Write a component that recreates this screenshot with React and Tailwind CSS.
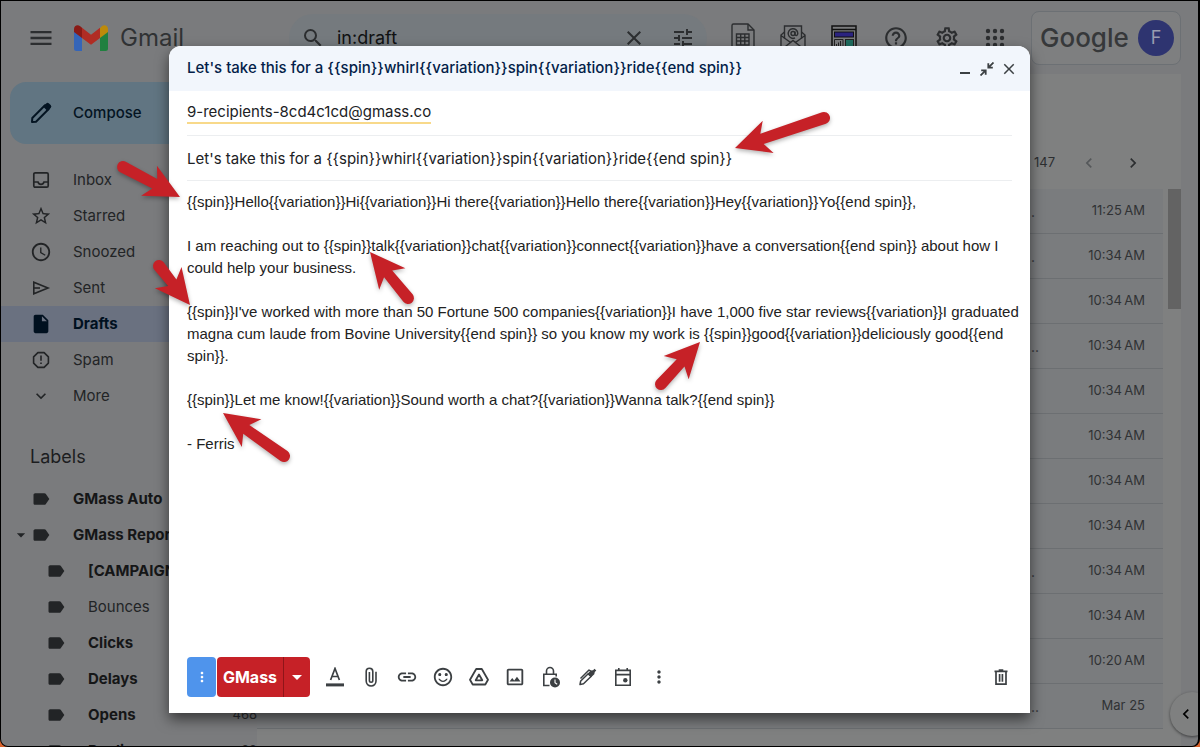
import { useState } from "react";
import {
    MdAccessTime,
    MdArrowDropDown,
    MdClose,
    MdExpandMore,
    MdHelpOutline,
    MdInsertDriveFile,
    MdLabel,
    MdLink,
    MdMenu,
    MdMoreVert,
    MdOutlineInsertPhoto,
    MdOutlineSettings,
    MdSearch,
    MdSentimentSatisfiedAlt,
    MdStarBorder,
    MdTune,
    MdChevronLeft,
    MdChevronRight,
} from "react-icons/md";

const SUBJECT = "Let's take this for a {{spin}}whirl{{variation}}spin{{variation}}ride{{end spin}}";

const BODY = `{{spin}}Hello{{variation}}Hi{{variation}}Hi there{{variation}}Hello there{{variation}}Hey{{variation}}Yo{{end spin}},

I am reaching out to {{spin}}talk{{variation}}chat{{variation}}connect{{variation}}have a conversation{{end spin}} about how I could help your business.

{{spin}}I've worked with more than 50 Fortune 500 companies{{variation}}I have 1,000 five star reviews{{variation}}I graduated magna cum laude from Bovine University{{end spin}} so you know my work is {{spin}}good{{variation}}deliciously good{{end spin}}.

{{spin}}Let me know!{{variation}}Sound worth a chat?{{variation}}Wanna talk?{{end spin}}

- Ferris`;

function InboxIcon() {
    return (
        <svg viewBox="0 0 20 20" className="size-5" fill="none" stroke="currentColor" strokeWidth="1.7">
            <rect x="2.8" y="2.8" width="14.4" height="14.4" rx="1.4" />
            <path d="M3 12h4c.4 1.5 1.5 2.3 3 2.3s2.600-.8 3-2.300h4" />
        </svg>
    );
}

function SentIcon() {
    return (
        <svg viewBox="0 0 20 20" className="size-5" fill="none" stroke="currentColor" strokeWidth="1.6">
            <path d="M2.800 4.200v11.600L17 10z" />
            <path d="M2.800 10H9" />
        </svg>
    );
}

function SpamIcon() {
    return (
        <svg viewBox="0 0 20 20" className="size-5">
            <path fill="none" stroke="currentColor" strokeWidth="1.6" strokeLinejoin="round" d="M6.900 2.600h6.200l4.300 4.300v6.200l-4.300 4.300H6.900L2.600 13.100V6.900z" />
            <path fill="currentColor" d="M9.200 5.600h1.600v5.200H9.200zM9.200 12.400h1.600V14H9.200z" />
        </svg>
    );
}

function PencilIcon() {
    return (
        <svg viewBox="0 0 24 24" className="size-6">
            <path fill="none" stroke="currentColor" strokeWidth="2" strokeLinejoin="round" d="M3 21l.3-4L16 4.300 19.700 8 7 20.700z" />
            <path fill="currentColor" d="M14 5.500L17.200 2.400a2 2 0 0 1 2.800 0l1.700 1.700a2 2 0 0 1 0 2.800L18.500 10z" />
        </svg>
    );
}

function GmailLogo() {
    return (
        <svg viewBox="0 0 34 26" className="h-[26px] w-[34px]">
            <path fill="#3565b8" d="M0 6l8 6v14H2.500A2.500 2.500 0 0 1 0 23.500z" />
            <path fill="#20803f" d="M34 6l-8 6v14h5.500a2.500 2.500 0 0 0 2.500-2.500z" />
            <path fill="#bd8a0a" d="M26 3.200l1.800-1.900C30.500-1 34 .8 34 4v3l-8 6z" />
            <path fill="#8a1a15" d="M0 7V4C0 .8 3.500-1 6.200 1.300L8 2.800V13z" />
            <path fill="#b02c24" d="M8 2.800l9 6.900 9-6.900V13l-9 6.800L8 13z" />
        </svg>
    );
}

function SheetIcon() {
    return (
        <svg viewBox="0 0 24 30" className="h-[30px] w-6" fill="none" stroke="currentColor" strokeWidth="1.4">
            <path d="M1 2.500A1.500 1.500 0 0 1 2.500 1H17l6 6v21.500H1z" />
            <path d="M17 1v6h6" />
            <path d="M5.500 11h12.500v11H5.500zM5.500 14.500H18M5.500 18H18M9.700 11v11M13.800 11v11" />
        </svg>
    );
}

function MailAtIcon() {
    return (
        <svg viewBox="0 0 26 26" className="size-[26px]" fill="none" stroke="currentColor" strokeWidth="1.4">
            <path d="M4.500 13.500V1h17v12.500" />
            <path d="M4.500 7L1 10v15h24V10l-3.500-3M1 10.500l9.500 7L1 25M25 10.500l-9.500 7L25 25M10.500 17.500l2.500-2 2.500 2" />
            <circle cx="13" cy="8.500" r="2" />
            <path d="M15 6.500v2.800c0 1.800 2.800 1.600 2.800-.8A4.800 4.800 0 1 0 15 12.900" />
        </svg>
    );
}

function TemplateIcon() {
    return (
        <svg viewBox="0 0 26 26" className="size-[26px]">
            <path fill="none" stroke="#111" strokeWidth="1.500" d="M1 1h24v24H1zM1 4.500h24" />
            <rect x="3.500" y="7" width="19" height="5" fill="#2b2380" stroke="#111" />
            <path fill="none" stroke="#222" d="M3.500 14.500h8.500v9H3.500zM5.500 21v-2M7.500 21v-3.500M9.500 21v-5" />
            <rect x="14.500" y="14.500" width="8" height="9" fill="#1f6d60" stroke="#222" />
        </svg>
    );
}

function AppsIcon() {
    const spots = [3, 10, 17];
    return (
        <svg viewBox="0 0 20 20" className="size-5" fill="currentColor">
            {spots.map(y => spots.map(x => <circle key={`${x}-${y}`} cx={x} cy={y} r="2.200" />))}
        </svg>
    );
}

function ShrinkIcon() {
    return (
        <svg viewBox="0 0 14 14" className="size-3.5" fill="none" stroke="currentColor" strokeWidth="1.8">
            <path d="M13.500.5L8.600 5.400M8.300 1.200v4.500h4.500" />
            <path d="M.5 13.500l4.900-4.900M1.200 8.300h4.500v4.500" />
        </svg>
    );
}

function TextColorIcon() {
    return (
        <svg viewBox="0 0 20 20" className="size-5">
            <rect x="1" y="16.400" width="18" height="3" fill="currentColor" />
            <path fill="none" stroke="currentColor" strokeWidth="1.700" d="M5.600 13L10 1.500 14.400 13M7 9.500h6" />
        </svg>
    );
}

function PaperclipIcon() {
    return (
        <svg viewBox="0 0 20 20" className="size-5" fill="none" stroke="currentColor" strokeWidth="1.600">
            <path d="M15 4.800v9.300a4.900 4.900 0 0 1-9.800 0V4.600a3.300 3.300 0 0 1 6.600 0v9a1.700 1.700 0 0 1-3.400 0V5" />
        </svg>
    );
}

function DriveIcon() {
    return (
        <svg viewBox="0 0 20 20" className="size-5" fill="none" stroke="currentColor" strokeWidth="1.800" strokeLinejoin="round">
            <path d="M7.200 2h5.600L19 12.800 16.300 17.500H3.700L1 12.800z" />
            <path d="M10 7.500l3.300 5.800H6.700z" />
        </svg>
    );
}

function LockClockIcon() {
    return (
        <svg viewBox="0 0 20 22" className="h-[22px] w-5">
            <path fill="none" stroke="currentColor" strokeWidth="1.600" d="M8.500 19.500H2.800V8.200h12.400v2.300M5.500 8V5a3.500 3.500 0 0 1 7 0v3" />
            <circle cx="14" cy="16.500" r="5" fill="currentColor" />
            <path fill="none" stroke="#fff" strokeWidth="1.100" d="M14 13.500v3.200l2.200 1.500" />
        </svg>
    );
}

function PenIcon() {
    return (
        <svg viewBox="0 0 20 20" className="size-5">
            <path fill="none" stroke="currentColor" strokeWidth="1.500" strokeLinejoin="round" d="M3 17.500l.7-3.500 7.500-7.300 2.800 2.800-7.500 7.300zM3.500 11.500L12 3l1.800 1.200" />
            <path fill="currentColor" d="M10.500 6.800l3.300-3.300L16 3.200 17.500 1.700l1.800 1.800-1.500 1.600-.5 2.100-3.500 3.200z" />
        </svg>
    );
}

function CalendarIcon() {
    return (
        <svg viewBox="0 0 20 20" className="size-5">
            <path fill="none" stroke="currentColor" strokeWidth="1.600" d="M2.800 3.400h14.400v14.800H2.800zM2.800 7.600h14.400M5.800 1v3M14.200 1v3" />
            <circle cx="12.300" cy="13.200" r="2.200" fill="currentColor" />
        </svg>
    );
}

function TrashIcon() {
    return (
        <svg viewBox="0 0 14 16" className="h-4 w-3.5" fill="none" stroke="currentColor" strokeWidth="1.700">
            <path d="M.5 2.400h13M4.700 1.200h4.600M2 2.500v12.700h10V2.500M5.600 5v7.800M8.400 5v7.800" />
        </svg>
    );
}

function IconButton({ label, className = "", children }) {
    return (
        <button type="button" aria-label={label} className={`flex shrink-0 items-center justify-center ${className}`}>
            {children}
        </button>
    );
}

const folders = [
    { name: "Inbox", icon: <InboxIcon /> },
    { name: "Starred", icon: <MdStarBorder className="size-[22px] shrink-0" /> },
    { name: "Snoozed", icon: <MdAccessTime className="size-[22px] shrink-0" /> },
    { name: "Sent", icon: <SentIcon /> },
    { name: "Drafts", icon: <MdInsertDriveFile className="size-[22px] shrink-0" />, active: true },
    { name: "Spam", icon: <SpamIcon /> },
    { name: "More", icon: <MdExpandMore className="size-5" /> },
];

const labels = [
    { name: "GMass Auto", bold: true },
    { name: "GMass Reports", bold: true, open: true },
    { name: "[CAMPAIGNS]", bold: true, child: true },
    { name: "Bounces", child: true },
    { name: "Clicks", bold: true, child: true },
    { name: "Delays", bold: true, child: true },
    { name: "Opens", bold: true, child: true, count: "468" },
    { name: "Replies", bold: true, child: true, count: "22" },
];

const drafts = [
    { time: "11:25\u202fAM", dots: "." },
    { time: "10:34\u202fAM", dots: "." },
    { time: "10:34\u202fAM" },
    { time: "10:34\u202fAM", dots: ".." },
    { time: "10:34\u202fAM" },
    { time: "10:34\u202fAM" },
    { time: "10:34\u202fAM" },
    { time: "10:34\u202fAM" },
    { time: "10:34\u202fAM", dots: "." },
    { time: "10:34\u202fAM" },
    { time: "10:20\u202fAM" },
    { time: "Mar 25", dots: ".." },
];

// tip and tail of each annotation arrow
const arrows = [
    { tip: [735, 148], tail: [824, 118] },
    { tip: [180, 197], tail: [123, 167] },
    { tip: [190, 305], tail: [159, 266] },
    { tip: [370, 252], tail: [408, 298] },
    { tip: [223, 413], tail: [284, 456] },
    { tip: [700, 342], tail: [661, 384] },
];

function Arrows() {
    return (
        <svg className="pointer-events-none absolute top-0 left-0 h-[747px] w-[1200px] drop-shadow-[0_2px_2px_rgba(0,0,0,0.3)]" fill="#c62127" aria-hidden="true">
            {arrows.map(({ tip, tail }) => {
                const dx = tail[0] - tip[0];
                const dy = tail[1] - tip[1];
                const len = Math.hypot(dx, dy);
                const angle = (Math.atan2(dy, dx) * 180) / Math.PI;
                return (
                    <path
                        key={tip.join()}
                        transform={`translate(${tip[0]} ${tip[1]}) rotate(${angle})`}
                        d={`M0 0L35-17 28.500-5.300 ${len}-6A6 6 0 0 1 ${len} 6L28.500 5.300 35 17z`}
                    />
                );
            })}
        </svg>
    );
}

function TopBar() {
    return (
        <header className="flex h-[73px] shrink-0 items-center text-[#2c2e30]">
            <IconButton label="Main menu" className="ml-[26px] size-7">
                <MdMenu className="size-7" />
            </IconButton>
            <a href="#inbox" className="ml-[19px] flex w-[215px] items-center gap-3">
                <GmailLogo />
                <span className="text-[24px] text-[#303234]">Gmail</span>
            </a>
            <form className="flex h-12 min-w-0 flex-1 items-center rounded-full bg-[#757a7e] px-3">
                <IconButton label="Search" className="size-6">
                    <MdSearch className="size-6" />
                </IconButton>
                <input
                    aria-label="Search mail"
                    defaultValue="in:draft"
                    className="ml-3 min-w-0 flex-1 bg-transparent text-[18px] text-[#101112] outline-none"
                />
                <IconButton label="Clear search" className="size-6">
                    <MdClose className="size-6" />
                </IconButton>
                <IconButton label="Search options" className="ml-[25px] size-6">
                    <MdTune className="size-6" />
                </IconButton>
            </form>
            <div className="ml-6 flex w-[274px] items-center justify-between">
                <IconButton label="Sheets"><SheetIcon /></IconButton>
                <IconButton label="Email lists"><MailAtIcon /></IconButton>
                <IconButton label="Templates"><TemplateIcon /></IconButton>
                <IconButton label="Support"><MdHelpOutline className="size-[26px]" /></IconButton>
                <IconButton label="Settings"><MdOutlineSettings className="size-[26px]" /></IconButton>
                <IconButton label="Google apps"><AppsIcon /></IconButton>
            </div>
            <a href="#account" className="mr-[17px] ml-[26px] flex h-[54px] w-[150px] shrink-0 items-center justify-between rounded-lg border border-[#6c7074] bg-[#7e7f80] pr-1.5 pl-2">
                <span className="text-[26px] leading-none font-medium text-[#36383a]">Google</span>
                <span className="flex size-9 items-center justify-center rounded-full bg-[#2e3470] text-[18px] text-[#9a9cb0]">F</span>
            </a>
        </header>
    );
}

function Sidebar() {
    return (
        <nav className="flex w-[256px] shrink-0 flex-col overflow-hidden text-[15px] text-[#222426]">
            <button type="button" className="mt-2 ml-[9px] flex h-[62px] w-[174px] shrink-0 items-center gap-5 rounded-2xl bg-[#617582] pl-[19px] font-medium text-[#041422]">
                <PencilIcon />
                Compose
            </button>
            <ul className="mt-[18px]">
                {folders.map(f => (
                    <li key={f.name}>
                        <a
                            href={`#${f.name.toLowerCase()}`}
                            className={`flex h-9 items-center gap-[22px] pl-[30px] ${f.active ? "bg-[#6a7180] font-bold text-[#00101f]" : ""}`}
                        >
                            <span className="flex w-5 justify-center">{f.icon}</span>
                            {f.name}
                        </a>
                    </li>
                ))}
            </ul>
            <h2 className="mt-[31px] pl-[29px] text-[18px] leading-6 text-[#1c1d1f]">Labels</h2>
            <ul className="mt-3">
                {labels.map(l => (
                    <li key={l.name} className="flex h-9 items-center">
                        <span className={`flex shrink-0 items-center justify-end ${l.child ? "w-[65px]" : "w-[50px]"}`}>
                            {l.open && <MdArrowDropDown className="size-5" />}
                            <MdLabel className="size-5" />
                        </span>
                        <a href={`#${l.name}`} className={`ml-[22px] flex-1 whitespace-nowrap ${l.bold ? "font-bold text-[#151617]" : ""}`}>
                            {l.name}
                        </a>
                        {l.count && <span className="text-[13px] text-[#2c2e30]">{l.count}</span>}
                    </li>
                ))}
            </ul>
        </nav>
    );
}

function MailList() {
    return (
        <main className="mr-[17px] flex min-w-0 flex-1 flex-col bg-[#7f8080]">
            <div className="mt-16 mb-0.5 flex h-[49px] shrink-0 items-center justify-end pr-[38px] text-[13px] text-[#2c2e30]">
                <span>147</span>
                <IconButton label="Newer" className="ml-6 size-5 text-[#55585a]">
                    <MdChevronLeft className="size-5" />
                </IconButton>
                <IconButton label="Older" className="ml-6 size-5">
                    <MdChevronRight className="size-5" />
                </IconButton>
            </div>
            <div className="flex">
                <ul className="flex-1">
                    {drafts.map((d, i) => (
                        <li key={i} className="flex h-[45px] items-center justify-end border-b border-[#6c6f72] bg-[#7a7c7e] pr-[18px] text-[13px] text-[#303234]">
                            <span className="w-3 text-[14px]">{d.dots}</span>
                            <span className="w-[102px] text-right">{d.time}</span>
                        </li>
                    ))}
                </ul>
                <div className="ml-[5px] h-[120px] w-[13px] bg-[#636363]" />
            </div>
        </main>
    );
}

function ComposeWindow() {
    const [subject, setSubject] = useState(SUBJECT);
    const [body, setBody] = useState(BODY);

    return (
        <section
            aria-label="Compose message"
            className="absolute top-[46px] right-[170px] bottom-[34px] left-[169px] flex flex-col overflow-hidden rounded-t-xl bg-white text-[#202124] shadow-[0_6px_14px_rgba(0,0,0,0.55)]"
        >
            <div className="flex h-[45px] shrink-0 items-center bg-[#f2f6fc] pr-3 pl-[18px]">
                <h1 className="min-w-0 flex-1 truncate text-[15px] font-medium text-[#041e49]">{subject}</h1>
                <div className="flex items-center gap-1.5 text-[#3c4043]">
                    <IconButton label="Minimize" className="h-4 w-[18px]">
                        <span className="mt-2 h-0.5 w-[10px] bg-[#3c4043]" />
                    </IconButton>
                    <IconButton label="Exit full screen">
                        <ShrinkIcon />
                    </IconButton>
                    <IconButton label="Close" className="size-[18px]">
                        <MdClose className="size-[18px]" />
                    </IconButton>
                </div>
            </div>

            <div className="flex min-h-0 flex-1 flex-col px-[18px]">
                <div className="flex h-[45px] shrink-0 items-center border-b border-[#eceef0]">
                    <a href="#recipients" className="border-b-2 border-[#f8d98a] text-[15px] leading-5">
                        9-recipients-8cd4c1cd@gmass.co
                    </a>
                </div>
                <input
                    aria-label="Subject"
                    value={subject}
                    onChange={e => setSubject(e.target.value)}
                    className="h-[45px] shrink-0 border-b border-[#eceef0] text-[15px] outline-none"
                />
                <textarea
                    aria-label="Message body"
                    value={body}
                    onChange={e => setBody(e.target.value)}
                    className="mt-2.5 -mr-3 min-h-0 flex-1 resize-none overflow-hidden font-['Liberation_Sans',Arial,sans-serif] text-[15px] leading-[22px] text-[#222] outline-none"
                />

                <div className="mb-4 flex h-10 shrink-0 items-center text-[#3c4043]">
                    <button type="button" aria-label="GMass settings" className="flex h-10 w-[29px] items-center justify-center rounded bg-[#4f94ec] text-white">
                        <MdMoreVert className="size-4" />
                    </button>
                    <button type="button" className="ml-px h-10 w-[66px] rounded-l bg-[#c62127] text-[16px] font-bold text-white">
                        GMass
                    </button>
                    <button type="button" aria-label="GMass send options" className="flex h-10 w-[27px] items-center justify-center rounded-r border-l border-[#8f1519] bg-[#c62127] text-white">
                        <MdArrowDropDown className="size-6 shrink-0" />
                    </button>
                    <div className="ml-[15px] flex items-center gap-4">
                        <IconButton label="Formatting options" className="size-5"><TextColorIcon /></IconButton>
                        <IconButton label="Attach files" className="size-5"><PaperclipIcon /></IconButton>
                        <IconButton label="Insert link" className="size-5"><MdLink className="size-[22px] shrink-0" /></IconButton>
                        <IconButton label="Insert emoji" className="size-5"><MdSentimentSatisfiedAlt className="size-[22px] shrink-0" /></IconButton>
                        <IconButton label="Insert files using Drive" className="size-5"><DriveIcon /></IconButton>
                        <IconButton label="Insert photo" className="size-5"><MdOutlineInsertPhoto className="size-[22px] shrink-0" /></IconButton>
                        <IconButton label="Confidential mode" className="size-5"><LockClockIcon /></IconButton>
                        <IconButton label="Insert signature" className="size-5"><PenIcon /></IconButton>
                        <IconButton label="Set up a time to meet" className="size-5"><CalendarIcon /></IconButton>
                        <IconButton label="More options" className="size-5"><MdMoreVert className="size-5" /></IconButton>
                    </div>
                    <IconButton label="Discard draft" className="mr-1 ml-auto">
                        <TrashIcon />
                    </IconButton>
                </div>
            </div>
        </section>
    );
}

export default function App() {
    return (
        <div className="h-screen bg-[#d9622b] font-[Inter,sans-serif]">
            <div className="relative flex h-full flex-col overflow-hidden rounded-b-lg border border-r-2 border-black bg-[#7a7b7d]">
                <TopBar />
                <div className="flex min-h-0 flex-1">
                    <Sidebar />
                    <MailList />
                </div>
                <button
                    type="button"
                    aria-label="Show side panel"
                    className="absolute -right-4 bottom-[10px] flex size-11 items-center rounded-full bg-[#7f8080] pl-1.5 text-black shadow-[0_1px_3px_rgba(0,0,0,0.5)]"
                >
                    <MdChevronLeft className="size-5" />
                </button>
            </div>
            <ComposeWindow />
            <Arrows />
        </div>
    );
}
